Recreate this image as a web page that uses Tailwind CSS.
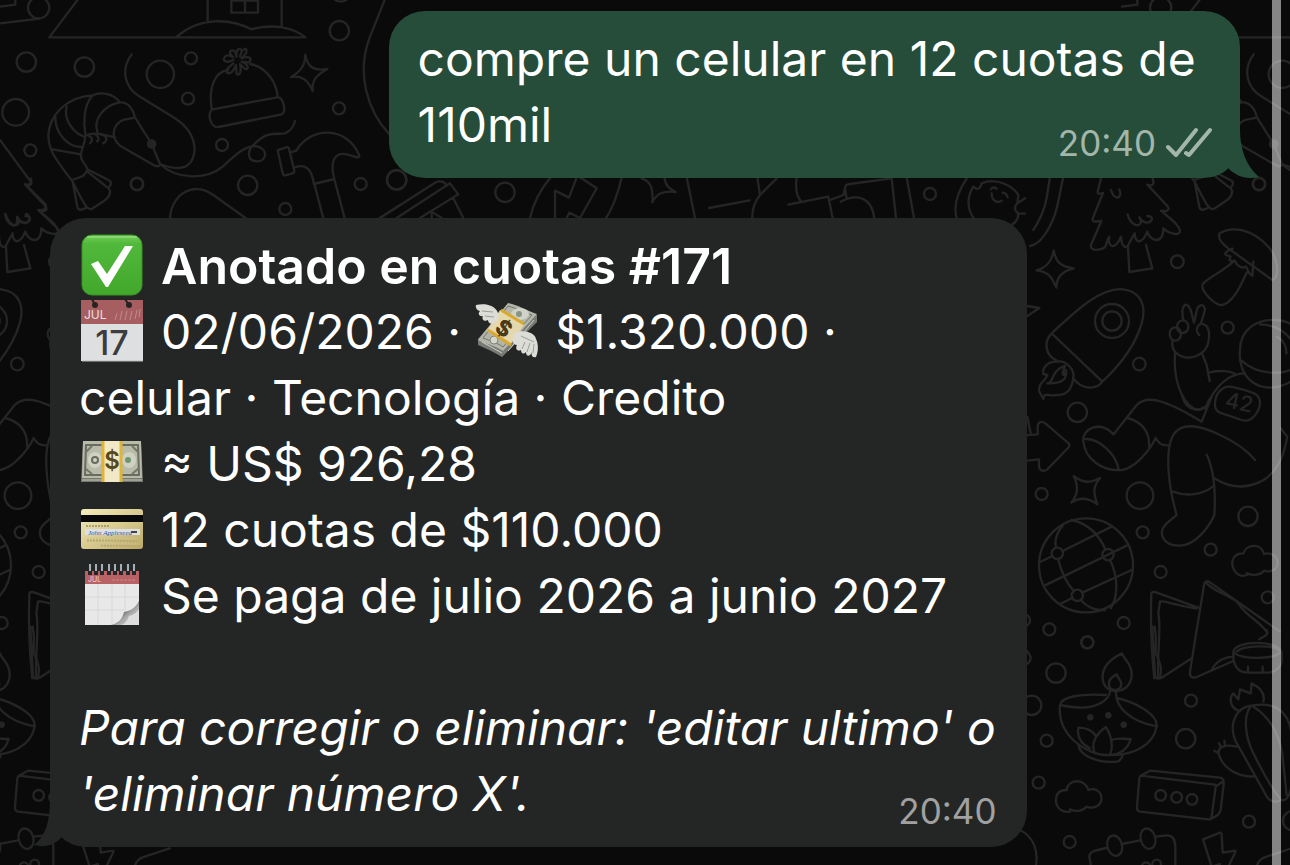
<!DOCTYPE html>
<html lang="es">
<head>
  <meta charset="UTF-8">
  <meta name="viewport" content="width=device-width, initial-scale=1.0">
  <title>Chat</title>
  <script src="https://cdn.jsdelivr.net/npm/@tailwindcss/browser@4"></script>
</head>
<body class="bg-[#0a0a0a] min-h-screen text-white font-[Inter,'Liberation_Sans',sans-serif]">
  <div class="relative min-h-screen overflow-hidden">
    <!-- Wallpaper -->
    <svg class="absolute inset-0 w-full h-full" viewBox="0 0 1290 865" preserveAspectRatio="xMidYMin slice" fill="none" stroke="#252525" stroke-width="7" stroke-linecap="round" stroke-linejoin="round" aria-hidden="true">
      <g id="winter" transform="scale(.33333)">
        <!-- house -->
        <path d="M0 20L46 14V0M0 70L118 56M240 -10L148 112H916C880 82 820 70 754 88C690 55 600 50 530 110M623 0V66M845 0V78M694 0V38H774V0M735 0V38M694 2H774"/>
        <circle cx="116" cy="23" r="32"/>
        <!-- bubbles -->
        <circle cx="79" cy="186" r="29"/><circle cx="253" cy="201" r="29"/><circle cx="481" cy="223" r="41"/>
        <circle cx="573" cy="175" r="18"/><circle cx="564" cy="296" r="18"/><circle cx="47" cy="337" r="40"/>
        <circle cx="91" cy="451" r="18"/><circle cx="411" cy="552" r="18"/><circle cx="666" cy="435" r="18"/>
        <circle cx="743" cy="556" r="29"/><circle cx="856" cy="627" r="18"/><circle cx="1018" cy="92" r="29"/>
        <circle cx="1017" cy="325" r="18"/><circle cx="1082" cy="552" r="18"/><circle cx="1190" cy="540" r="29"/>
        <circle cx="1022" cy="-24" r="29"/>
        <!-- prawn -->
        <path d="M215 541C165 475 145 450 145 405C148 350 195 290 278 286C300 274 340 280 360 307C385 305 400 330 405 352L455 432L480 492C480 500 470 500 462 496L360 437C335 415 335 385 360 365C372 356 390 358 405 352M215 541C235 530 255 535 262 508C258 490 240 485 243 463C245 440 255 435 255 411C260 400 290 400 300 402L345 412M158 448L243 463M166 350C165 400 205 445 247 440M200 320C190 360 220 400 255 411M278 286C250 315 250 370 256 402M360 307C310 315 280 360 292 395"/>
        <path d="M262 508L325 540C336 545 335 555 325 563L330 572C332 590 325 595 275 627C262 630 255 618 218 545M218 545L232 620C235 632 245 632 260 622M262 515L322 562M268 409C278 412 278 425 270 430M288 405C298 410 297 422 291 424M305 404C322 408 324 422 310 430"/>
        <circle cx="455" cy="432" r="11" fill="#252525"/>
        <path d="M395 163C360 210 375 265 420 290L525 355C600 405 595 480 555 500C530 510 500 500 480 492C530 540 620 540 668 500C700 470 740 430 775 440C805 450 800 485 770 484C740 482 740 450 765 430C805 390 830 405 855 400C870 393 880 385 885 363"/>
        <!-- beanie -->
        <path d="M635 325C625 260 645 215 685 210M750 192C800 200 830 250 833 290M638 328L832 292C850 290 860 335 845 343L655 381C630 385 620 335 638 328Z"/>
        <path d="M700 180C680 190 665 185 675 170C685 160 692 170 700 172C680 155 695 145 705 155L710 170C705 145 725 140 725 155L720 170C728 140 745 140 738 160L725 175C750 165 760 180 745 187L725 185C750 195 745 210 735 207L720 192C725 215 720 228 710 222L708 195C700 215 690 225 680 217C675 207 690 200 700 190"/>
        <path d="M916 164C922 200 940 215 982 207C950 225 935 240 938 273C925 240 905 225 873 231C900 215 915 200 916 164Z"/>
        <!-- hammer -->
        <path d="M833 451L858 442C862 440 866 442 867 446L883 512C884 518 880 520 875 521L856 526C852 527 849 525 848 520L833 451M872 457L889 452C930 380 1040 375 1078 467C1078 478 1060 467 1040 463C1000 455 990 490 1003 537L942 552C935 510 920 490 884 502M942 548L970 655M1003 537L1034 655"/>
        <path d="M510 660C510 585 580 540 640 585L745 660M1160 -15L1108 115C1070 220 1100 330 1170 405M1130 660L1200 615"/>
      </g>
      <use href="#winter" x="1122"/>
      <!-- tree at the left edge -->
      <path transform="scale(.33333)" d="M0 420L92 545C94 555 85 555 75 552L136 612C142 625 130 632 115 630L175 688M15 642C20 670 40 685 50 672L52 650C60 672 80 675 88 660C92 645 80 642 78 642"/>

      <g id="space">
        <g transform="translate(1020 170) scale(.33333)">
          <!-- tree -->
          <path d="M243 25L233 65C232 75 242 70 249 69L218 145C215 160 232 153 244 153L213 225C210 245 240 242 255 232C262 215 265 200 268 200C262 235 285 240 303 200C305 235 320 240 330 215L344 190C345 220 365 225 382 185C390 215 430 225 430 175C445 190 480 200 480 183C478 165 455 150 423 122C440 125 452 122 442 108L382 44C395 50 405 45 398 25M324 230L328 306L397 295L378 225M273 60C280 85 300 90 301 70L298 58M323 133C330 160 350 172 360 162C366 155 360 145 358 142C370 162 390 162 396 148C396 138 385 138 382 138"/>
          <path d="M101 241C107 275 120 290 161 295C125 305 110 320 109 353C95 320 85 305 50 301C80 292 96 275 101 241Z"/>
          <!-- rocket -->
          <path d="M110 572C75 555 70 515 95 490C160 430 240 350 310 358C365 365 380 410 365 460C345 530 295 590 247 635C230 660 185 660 160 625M95 490L247 635"/>
          <circle cx="276" cy="453" r="51"/><circle cx="276" cy="453" r="29"/>
          <path d="M160 625C165 600 140 570 110 575C80 575 66 595 70 612L82 615C78 632 52 640 58 665L70 687C70 665 90 680 110 675C145 675 155 655 160 625M82 640C102 640 92 600 135 588C120 622 135 620 138 600C145 640 105 640 82 640"/>
          <circle cx="717" cy="42" r="19"/><circle cx="472" cy="275" r="19"/><circle cx="623" cy="473" r="18"/><circle cx="358" cy="582" r="19"/>
          <!-- mushroom -->
          <path d="M599 190C640 165 700 180 745 230C775 265 780 320 757 330L625 235C605 220 592 205 599 190ZM638 236C625 240 610 250 618 255L632 260C625 270 630 275 645 272C648 285 665 298 678 290L688 310L697 318L700 275M640 275C600 310 570 320 550 340C535 360 590 410 605 405C640 400 665 340 680 308"/>
          <!-- astronaut -->
          <path d="M458 510C450 545 480 563 505 563C550 560 570 530 567 490C565 460 540 455 533 470C528 480 532 490 538 495M490 450C480 405 500 390 512 420L522 458L532 415C545 395 560 410 552 430L542 462M465 550C460 620 480 690 520 715C530 720 545 720 550 712M545 548L560 585L569 633M570 607C600 600 630 603 645 611M555 715C580 660 620 610 675 610"/>
          <ellipse cx="466" cy="492" rx="17" ry="20"/><ellipse cx="488" cy="470" rx="17" ry="19"/>
          <path d="M660 540C660 480 710 445 770 450C850 455 870 540 840 610C790 670 690 670 665 590C658 570 658 560 660 540ZM665 572C710 615 790 620 840 585M720 463C770 465 810 490 830 540M770 500C790 510 800 530 799 550"/>
          <path d="M610 655C620 645 640 650 695 667C720 675 725 695 715 720C700 750 680 755 665 750L600 728C575 718 583 670 610 655Z"/>
          <path d="M22 408L58 414L22 438" />
        </g>
        <g transform="translate(1020 400) scale(.33333)">
          <circle cx="172" cy="37" r="29"/><circle cx="65" cy="282" r="18"/><circle cx="360" cy="287" r="40"/><circle cx="368" cy="397" r="18"/>
          <circle cx="684" cy="349" r="29"/><circle cx="572" cy="449" r="18"/><circle cx="422" cy="516" r="18"/><circle cx="743" cy="592" r="18"/>
          <circle cx="311" cy="669" r="18"/><circle cx="88" cy="688" r="18"/><circle cx="12" cy="661" r="18"/><circle cx="202" cy="727" r="18"/>
          <path d="M-40 110L53 103V78C54 65 66 62 76 70L146 130C150 135 148 140 144 144L82 208C70 217 58 210 57 200V178L-40 188M22 50L32 100"/>
          <path d="M281 103C240 60 185 85 190 125C195 175 245 215 305 210C345 205 390 150 407 114C415 130 430 137 445 136M281 103L350 15C380 -15 430 -5 545 65L575 -10M322 54C365 65 390 95 387 140M195 117C240 115 290 165 296 210M487 -10C500 35 540 35 560 20M470 345C440 240 440 160 453 120C475 55 550 80 600 105C645 125 680 150 705 180M560 164C580 205 588 260 583 345C570 375 530 435 480 437C430 438 410 400 440 370L470 345M458 275C500 290 550 285 580 258M583 235C660 285 740 250 770 200C785 180 795 150 802 110L782 85"/>
          <path d="M161 228C190 250 210 250 240 234C218 260 220 280 232 313C205 293 180 290 154 308C177 280 175 255 161 228Z"/>
          <!-- globe -->
          <circle cx="198" cy="496" r="141"/>
          <path d="M60 486L97 468M128 453L275 380M75 556L320 437M120 612L157 594M187 578L335 510M155 360C200 370 235 400 256 448M270 480C295 530 295 590 272 625M128 378C107 400 103 430 109 443M114 477C125 520 140 550 162 574M182 600C205 625 230 632 255 630"/>
          <circle cx="112" cy="460" r="17"/><circle cx="264" cy="464" r="17"/><circle cx="172" cy="586" r="17"/>
          <path d="M680 525C655 535 635 510 637 485C640 465 655 460 670 460C680 430 725 430 732 462C755 455 773 470 773 490C772 510 750 518 732 512C722 525 700 528 680 520"/>
          <!-- open book -->
          <path d="M403 835C397 780 390 700 394 580C396 575 405 575 410 578L535 623M415 835C410 760 425 690 415 640L420 605C430 600 440 610 530 626M530 690L553 550C555 543 562 542 570 547L780 695M560 550C590 580 640 590 655 610C680 650 715 660 740 695"/>
        </g>
        <g transform="translate(1020 630) scale(.33333)">
          <path d="M397 -10L405 135C406 147 415 148 425 143L515 85M404 -10C415 50 400 60 410 75C425 110 425 120 420 143M530 0L510 125C508 142 518 145 530 141L640 93M575 120C590 90 620 80 640 80M740 0C748 15 730 20 718 28"/>
          <!-- tape roll -->
          <path d="M640 65C645 30 780 30 782 65C775 90 650 90 640 65V85C645 120 665 128 685 128H745C775 125 785 105 785 90V65M684 110V126M728 110V126M650 65C670 45 760 45 775 60"/>
          <!-- oil lamp -->
          <path d="M306 70C275 85 245 110 248 145C250 170 265 182 290 184C330 180 345 140 328 105C320 90 312 85 306 70ZM290 133C275 140 265 150 267 165C270 185 302 185 304 162C303 150 295 145 290 133ZM270 185C265 215 225 232 190 233C160 233 135 228 120 225C125 200 180 190 258 195M288 185C285 230 330 275 410 289M290 204C340 215 415 250 410 290C400 345 340 380 260 375C200 375 110 315 120 225M175 345C180 380 240 400 290 395C300 394 305 385 308 377M210 355C180 340 170 320 175 293C200 292 220 305 228 318M225 370C210 340 230 310 258 291C275 320 280 350 270 375M275 330C290 322 310 327 332 327C325 355 300 375 270 375"/>
          <g fill="#252525" stroke-width="2"><circle cx="211" cy="262" r="9"/><circle cx="265" cy="256" r="9"/><circle cx="311" cy="284" r="9"/></g>
          <circle cx="202" cy="37" r="18"/><circle cx="108" cy="129" r="29"/><circle cx="35" cy="226" r="29"/><circle cx="80" cy="332" r="18"/>
          <circle cx="513" cy="212" r="18"/><circle cx="497" cy="326" r="29"/><circle cx="56" cy="458" r="18"/><circle cx="149" cy="636" r="18"/>
          <circle cx="687" cy="575" r="18"/><circle cx="818" cy="572" r="29"/>
          <!-- radish -->
          <path d="M655 242C625 230 630 200 640 190L655 208L660 178L692 190L695 160C725 175 735 195 730 215M680 230C640 245 630 290 645 330L735 490C745 515 765 520 785 510C800 515 820 490 815 420V320C810 240 760 210 680 230M690 232C670 260 675 320 700 370C725 420 750 470 780 505M700 230C750 260 785 320 790 400L800 495M650 350C610 340 590 355 597 375C610 415 650 440 700 440M583 362L594 368M597 340L603 352M613 332L615 345"/>
          <path d="M150 545C125 550 105 530 108 505C110 485 125 480 140 480C145 445 195 445 205 480C230 470 247 490 244 510C240 532 215 537 200 530C185 545 165 545 150 538"/>
          <path d="M362 437L585 464C587 464 588 466 587 470L575 560C574 567 570 569 565 568L360 545C352 543 350 538 351 530L358 445ZM362 437L390 422L600 443C612 445 612 455 611 463L602 540C600 550 590 560 570 568M587 470L608 455"/>
          <circle cx="422" cy="496" r="16"/><circle cx="470" cy="502" r="16"/><circle cx="516" cy="508" r="16"/>
          <!-- notepad -->
          <path d="M215 720L208 680C208 665 220 662 260 654M305 642L360 631M407 620L440 616C460 615 465 630 466 650V720"/>
          <ellipse cx="284" cy="647" rx="22" ry="31" transform="rotate(-15 284 647)"/><ellipse cx="384" cy="626" rx="22" ry="31" transform="rotate(-15 384 626)"/>
          <circle cx="378" cy="710" r="13"/><circle cx="410" cy="702" r="13"/>
          <path d="M549 628L600 608C605 608 605 610 605 615L608 668L645 662C647 662 646 665 645 668L620 720M549 628L575 710L600 702M710 710C715 690 725 685 740 680L815 655M0 600C40 620 55 660 48 705M20 62C36 80 36 92 20 103"/>
        </g>
        <text x="1224" y="407" transform="rotate(12 1224 407)" font-size="22" fill="#252525" stroke="none" font-weight="500">42</text>
      </g>
      <use href="#space" x="-1122"/>

      <!-- strip between the two messages -->
      <g transform="translate(380 160) scale(.33333)">
        <circle cx="50" cy="59" r="29"/><circle cx="375" cy="97" r="29"/><circle cx="1650" cy="102" r="18"/>
        <path d="M0 174L165 68C180 60 195 65 200 78M50 174L210 70L235 103L120 174M220 115L250 174M155 155L185 174M155 155V174M512 52C480 90 460 130 450 174M590 52L567 113L525 92V174M600 52L650 85L600 174L568 158L560 174M725 52C715 100 695 150 678 174M785 55C815 65 820 90 817 127C830 100 850 92 887 96C865 85 855 75 853 50M920 52L945 174M987 144L1109 121M1132 52L1140 105M1190 55L1140 105C1120 130 1116 150 1117 174"/>
        <path d="M1250 52C1245 80 1250 110 1262 122M1225 134L1345 110L1358 174M1382 125C1430 100 1475 110 1483 174M1350 120L1390 105L1395 85C1395 75 1400 74 1410 72L1535 55L1548 174M1395 85L1400 115M1580 52L1602 174"/>
        <path d="M1762 52C1730 100 1720 140 1730 174M1780 80C1760 110 1760 150 1785 180M1780 80C1790 90 1800 90 1805 70C1850 50 1900 80 1915 105L1912 130C1900 140 1905 155 1915 160C1915 185 1900 195 1880 200M1912 130L1935 115M1915 160L1935 161M1835 100C1835 125 1855 130 1865 122M1833 88C1838 82 1845 82 1850 86M1868 98C1875 98 1880 104 1883 112M2010 52C2000 100 2005 140 1960 210M2050 52C2035 110 2035 170 1990 230C1975 250 1965 255 1950 258"/>
      </g>
    </svg>

    <main class="relative pt-[11px] pb-[18px] flex flex-col gap-10 text-[48px] leading-[66px]">
      <!-- Outgoing message -->
      <article class="relative self-end mr-[50px] w-[66%] rounded-[36px] bg-[#264d3a] pl-[29px] pr-7 pt-[15px] pb-5">
        <svg class="absolute -right-[19px] bottom-0 w-10 h-12" viewBox="0 0 40 48" fill="#264d3a" aria-hidden="true">
          <path d="M21 0C21 19 27 36 40 47C28 50 17 46 10 39L0 20V0Z"/>
        </svg>
        <p>compre un celular en 12 cuotas de</p>
        <div class="flex justify-between">
          <p>110mil</p>
          <div class="flex items-center gap-2 h-[66px] pt-9 text-[35px] text-[#a3b6aa]">
            <time>20:40</time>
            <svg class="w-12 h-8" viewBox="0 0 48 32" fill="none" stroke="#a3b6aa" stroke-width="4" stroke-linecap="round" stroke-linejoin="round" role="img" aria-label="Leído">
              <path d="M4 20L12 28L32 3M22 26L25 28L46 3"/>
            </svg>
          </div>
        </div>
      </article>

      <!-- Incoming message -->
      <article class="relative self-start ml-[50px] w-[75.7%] rounded-[36px] bg-[#242625] pl-[29px] pr-[30px] pt-[15px] pb-5">
        <svg class="absolute -left-4 bottom-0 w-10 h-12" viewBox="0 0 40 48" fill="#242625" aria-hidden="true">
          <path d="M16 0C16 19 13 36 0 46C11 49 20 46 27 39L40 20V0Z"/>
        </svg>

        <h2 class="flex items-center gap-4 text-[50px] font-semibold">
          <svg class="w-[66px] h-[66px]" viewBox="0 0 66 66" role="img" aria-label="Listo">
            <defs>
              <linearGradient id="green" x2="0" y2="1"><stop stop-color="#73cf58"/><stop offset=".15" stop-color="#50b83b"/><stop offset="1" stop-color="#42a82b"/></linearGradient>
            </defs>
            <rect x="3" y="2" width="60" height="60" rx="10" fill="url(#green)" stroke="#389424"/>
            <path d="M9 4H57" stroke="#8ad673" stroke-width="2" stroke-linecap="round"/>
            <path d="M12 31L19 28L28 41L46 13H54L29 54H27Z" fill="#fff"/>
          </svg>
          Anotado en cuotas #171
        </h2>

        <div class="flex items-center gap-4">
          <svg class="w-[66px] h-[66px]" viewBox="0 0 66 66" role="img" aria-label="Calendario">
            <path d="M2 1H64V26H2Z" fill="#a65e60"/>
            <path d="M2 25H64V62H2Z" fill="#dedfe1"/>
            <path d="M3 62H64" stroke="#b8b8ba"/>
            <circle cx="16" cy="6" r="3" fill="#272323"/><circle cx="50" cy="6" r="3" fill="#272323"/>
            <path d="M16 6L13 0M50 6L46 0" stroke="#272323" stroke-width="2"/>
            <path d="M36 21L38 14M41 21L43 12M46 21L48 12M51 21L53 12M56 20L58 11M60 18L61 10" stroke="#c18c8c"/>
            <text x="5" y="20" font-size="12" fill="#f0dfdf">JUL</text>
            <text x="33" y="56" font-size="34" font-weight="500" text-anchor="middle" fill="#3c3c3e">17</text>
          </svg>
          <div class="flex items-center gap-3">
            <span>02/06/2026 ·</span>
            <svg class="w-[66px] h-[66px]" viewBox="0 0 66 66" role="img" aria-label="Dinero con alas">
              <path d="M34 6C46 7 55 13 64 16V23L29 58C21 53 12 49 5 46V40Z" fill="#777a75"/>
              <path d="M35 4C46 6 54 12 64 15L30 52C21 46 12 45 5 41Z" fill="#b2b5a8"/>
              <path d="M35 7C44 9 50 14 59 16L30 48C23 43 17 42 10 39Z" fill="none" stroke="#73776c"/>
              <ellipse cx="47" cy="15" rx="9" ry="6" fill="#d1d3c8"/><circle cx="46" cy="15" r="3" fill="#869683"/>
              <circle cx="21" cy="41" r="4" fill="#d5d6cb" stroke="#81857b"/>
              <path d="M9 43L29 54M35 52L61 21" stroke="#d0d1c8"/>
              <path d="M27 11L51 26L37 46L14 32Z" fill="#e6d8ad"/>
              <path d="M28 11L51 25M15 31L38 46" stroke="#d8a92f" stroke-width="3"/>
              <text x="31" y="37" text-anchor="middle" transform="rotate(35 31 29)" font-size="22" font-weight="800" fill="#4b3915">$</text>
              <path d="M25 14C22 6 12 4 3 6C2 9 5 12 7 12C4 15 7 18 10 17C8 21 12 23 15 21C15 25 20 26 22 23C25 22 26 18 25 14Z" fill="#dcddd7"/>
              <path d="M42 34C49 30 62 33 63 40C66 46 65 54 63 58C59 59 58 56 59 53C57 58 53 58 53 53C50 56 48 54 48 51C44 53 42 49 44 46C39 46 38 39 42 34Z" fill="#dcddd7"/>
              <path d="M9 12L20 13M12 17L21 18M48 37L61 43M49 50L52 43M54 53L57 44M60 54L61 45" stroke="#9c9e98"/>
            </svg>
            <span class="pl-1">$1.320.000 ·</span>
          </div>
        </div>

        <p>celular · Tecnología · Credito</p>

        <div class="flex items-center gap-4">
          <svg class="w-[66px] h-[66px]" viewBox="0 0 66 66" role="img" aria-label="Billete">
            <path d="M4 11H62L64 51H2Z" fill="#777970"/>
            <path d="M4 10H62L63 47H3Z" fill="#b9bba9"/>
            <path d="M7 14H59L60 44H6Z" fill="none" stroke="#686c61" stroke-width="2"/>
            <ellipse cx="16" cy="29" rx="7" ry="8" fill="#d0d1c2"/><ellipse cx="50" cy="29" rx="7" ry="8" fill="#d0d1c2"/>
            <circle cx="16" cy="29" r="3" fill="none" stroke="#666c5f" stroke-width="2"/><circle cx="49" cy="29" r="3" fill="#6d9671"/>
            <path d="M7 21L13 15M53 15L59 21M7 38L13 43M53 43L60 37" stroke="#737769" stroke-width="2"/>
            <path d="M3 49H63" stroke="#c7c8bd"/>
            <path d="M23 10H43V51H23Z" fill="#f1e8c5"/>
            <path d="M24 10V51M42 10V51" stroke="#e0b43b" stroke-width="3"/>
            <text x="33" y="38" text-anchor="middle" font-size="24" font-weight="600" fill="#57491e">$</text>
          </svg>
          <span>≈ US$ 926,28</span>
        </div>

        <div class="flex items-center gap-4">
          <svg class="w-[66px] h-[66px]" viewBox="0 0 66 66" role="img" aria-label="Tarjeta">
            <defs>
              <linearGradient id="gold" x2="1" y2="1"><stop stop-color="#f5edbb"/><stop offset="1" stop-color="#bba966"/></linearGradient>
            </defs>
            <rect x="2" y="12" width="62" height="40" rx="3" fill="url(#gold)"/>
            <path d="M2 18H64V25H2Z" fill="#090909"/>
            <path d="M6 32H61V38H6Z" fill="#dde0e3"/>
            <path d="M7 29H31" stroke="#756d46" stroke-dasharray="2 1"/>
            <path d="M52 35H58" stroke="#444" stroke-width="2"/>
            <text x="9" y="38" font-size="7" font-style="italic" font-family="Liberation Serif" fill="#354e9c">John Appleseed</text>
            <path d="M8 43H59M22 48H60" stroke="#b5a66c" stroke-width="3" stroke-dasharray="2 1"/>
            <path d="M8 42H59M22 47H60" stroke="#dcd09a" stroke-dasharray="2 1"/>
          </svg>
          <span>12 cuotas de $110.000</span>
        </div>

        <div class="flex items-center gap-4">
          <svg class="w-[66px] h-[66px]" viewBox="0 0 66 66" role="img" aria-label="Calendario de espiral">
            <defs>
              <linearGradient id="curl" x1="0" y1="0" x2="1" y2="1"><stop offset=".3" stop-color="#444"/><stop offset=".6" stop-color="#aaa"/><stop offset="1" stop-color="#ddd"/></linearGradient>
            </defs>
            <path d="M6 8H60V62H6Z" fill="#e8e8e9"/>
            <path d="M6 8H60V21H6Z" fill="#b86266"/>
            <path d="M6 34H60M6 47H45M19 21V62M33 21V62M46 21V48" stroke="#d8d8da"/>
            <path d="M60 38C56 46 50 48 45 49C43 56 40 60 32 62H60Z" fill="url(#curl)"/>
            <path d="M60 46C57 51 53 52 50 53C48 58 46 61 42 62H60Z" fill="#dededf"/>
            <text x="9" y="19" font-size="7" fill="#f0d8d8">JUL</text>
            <path d="M33 17H56" stroke="#cb8587" stroke-dasharray="3 1"/>
            <path d="M11 12V1M17 12V1M23 12V1M30 12V1M36 12V1M42 12V1M49 12V1M55 12V1" stroke="#26282c" stroke-width="4"/>
            <path d="M11 8V1M17 8V1M23 8V1M30 8V1M36 8V1M42 8V1M49 8V1M55 8V1" stroke="#a4afb4" stroke-width="2"/>
          </svg>
          <span>Se paga de julio 2026 a junio 2027</span>
        </div>

        <div class="pt-[66px] flex items-end justify-between">
          <p class="italic whitespace-nowrap">Para corregir o eliminar: 'editar ultimo' o<br>'eliminar número X'.</p>
          <time class="w-0 flex justify-end text-[35px] leading-8 text-[#a0a1a0]">20:40</time>
        </div>
      </article>
    </main>

    <!-- Scroll bar -->
    <div class="absolute right-[9px] inset-y-0 w-[9px] bg-white/50"></div>
  </div>
</body>
</html>
